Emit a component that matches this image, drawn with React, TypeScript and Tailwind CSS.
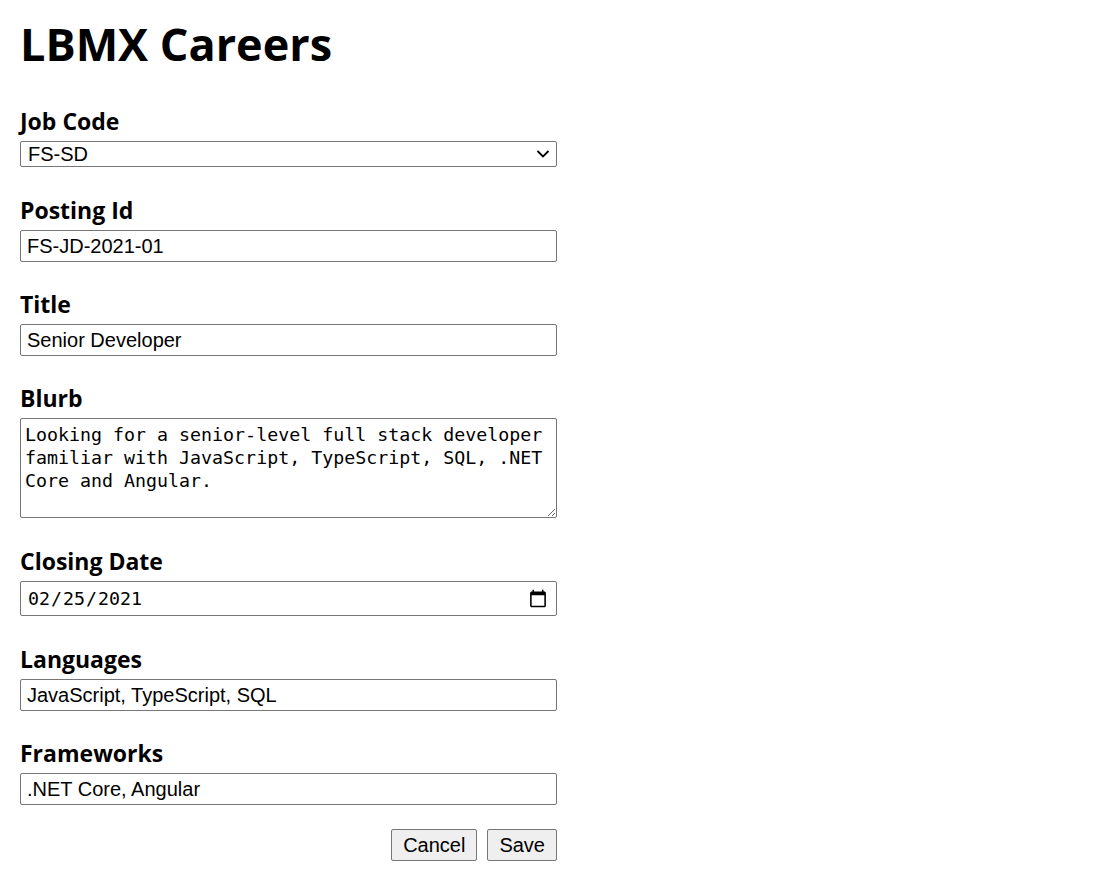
import { useState } from 'react'

const labelClass = "block text-[23px] leading-[20px] font-bold font-['Open_Sans',sans-serif] text-black mb-[10px]"
const inputClass = "block w-full h-[32px] border border-[#767676] rounded-[2px] px-[6px] text-[20px] font-['Liberation_Sans',Arial,sans-serif] text-black bg-white outline-none"

function Field({ label, gap = 'mb-[32px]', children }: { label: string; gap?: string; children: React.ReactNode }) {
  return (
    <div className={gap}>
      <label className={labelClass}>{label}</label>
      {children}
    </div>
  )
}

export default function App() {
  const [jobCode, setJobCode] = useState('FS-SD')
  const [postingId, setPostingId] = useState('FS-JD-2021-01')
  const [title, setTitle] = useState('Senior Developer')
  const [blurb, setBlurb] = useState(
    'Looking for a senior-level full stack developer familiar with JavaScript, TypeScript, SQL, .NET Core and Angular.'
  )
  const [closing, setClosing] = useState('2021-02-25')
  const [languages, setLanguages] = useState('JavaScript, TypeScript, SQL')
  const [frameworks, setFrameworks] = useState('.NET Core, Angular')

  return (
    <div className="min-h-screen bg-white px-[20px] pt-[12px]">
      <h1 className="text-[45px] leading-[64px] font-bold font-['Open_Sans',sans-serif] text-black mb-[35px]">
        LBMX Careers
      </h1>

      <form className="w-[537px]" onSubmit={(e) => e.preventDefault()}>
        <Field label="Job Code" gap="mb-[33px]">
          <div className="relative">
            <select
              value={jobCode}
              onChange={(e) => setJobCode(e.target.value)}
              className="block w-full h-[26px] appearance-none border border-[#767676] rounded-[2px] pl-[7px] pr-[30px] text-[20px] leading-[24px] font-['Liberation_Sans',Arial,sans-serif] text-black bg-white outline-none"
            >
              <option value="FS-SD">FS-SD</option>
              <option value="FS-JD">FS-JD</option>
            </select>
            <svg
              className="absolute right-[7px] top-[8px] pointer-events-none"
              width="14"
              height="10"
              viewBox="0 0 14 10"
              fill="none"
            >
              <path d="M1.5 2 L7 7.5 L12.5 2" stroke="#000" strokeWidth="1.8" />
            </svg>
          </div>
        </Field>

        <Field label="Posting Id">
          <input className={inputClass} value={postingId} onChange={(e) => setPostingId(e.target.value)} />
        </Field>

        <Field label="Title">
          <input className={inputClass} value={title} onChange={(e) => setTitle(e.target.value)} />
        </Field>

        <Field label="Blurb" gap="mb-[33px]">
          <textarea
            value={blurb}
            onChange={(e) => setBlurb(e.target.value)}
            className="block w-full h-[100px] border border-[#767676] rounded-[2px] px-[4px] py-[4px] text-[18.3px] leading-[23px] font-['DejaVu_Sans_Mono',monospace] text-black bg-white outline-none"
          />
        </Field>

        <Field label="Closing Date" gap="mb-[33px]">
          <input
            type="date"
            value={closing}
            onChange={(e) => setClosing(e.target.value)}
            className="block w-full h-[35px] border border-[#767676] rounded-[2px] px-[6px] text-[18.3px] font-['DejaVu_Sans_Mono',monospace] text-black bg-white outline-none [&::-webkit-calendar-picker-indicator]:w-[20px] [&::-webkit-calendar-picker-indicator]:h-[20px] [&::-webkit-calendar-picker-indicator]:m-0"
          />
        </Field>

        <Field label="Languages">
          <input className={inputClass} value={languages} onChange={(e) => setLanguages(e.target.value)} />
        </Field>

        <Field label="Frameworks" gap="mb-[24px]">
          <input className={inputClass} value={frameworks} onChange={(e) => setFrameworks(e.target.value)} />
        </Field>

        <div className="flex justify-end gap-[10px]">
          <button
            type="button"
            className="h-[32px] px-[11px] border border-[#767676] rounded-[2px] bg-[#efefef] text-[20px] font-['Liberation_Sans',Arial,sans-serif] text-black"
          >
            Cancel
          </button>
          <button
            type="submit"
            className="h-[32px] px-[11px] border border-[#767676] rounded-[2px] bg-[#efefef] text-[20px] font-['Liberation_Sans',Arial,sans-serif] text-black"
          >
            Save
          </button>
        </div>
      </form>
    </div>
  )
}
